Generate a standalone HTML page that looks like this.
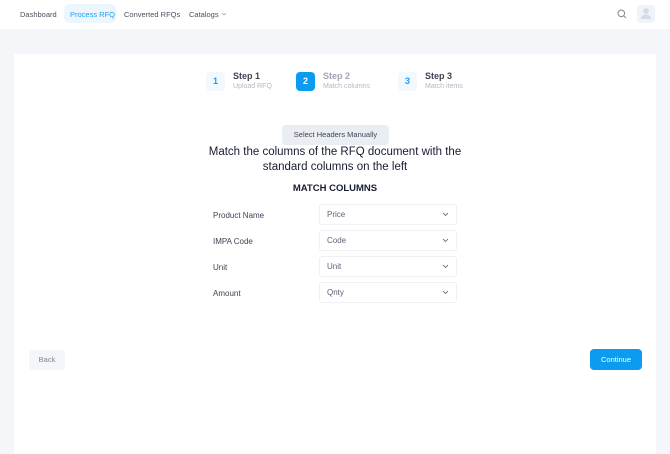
<!DOCTYPE html>
<html><head><style>
*{margin:0;padding:0;box-sizing:border-box}
body{width:670px;height:447px;background:#f4f6f9;font-family:"Liberation Sans",sans-serif;position:relative;overflow:hidden;color:#3f4254}
.a{position:absolute}
.nav{left:0;top:0;width:670px;height:29px;background:#fff}
.nl{font-size:7.5px;color:#4b4f5e;top:10px}
.card{left:14px;top:54px;width:642px;height:400px;background:#fff}
.sn{width:19px;height:19px;border-radius:4px;font-size:9px;font-weight:bold;text-align:center;line-height:19px}
.st{font-size:9px;font-weight:bold}
.ss{font-size:7px;color:#b5b5c3}
.lbl{font-size:8px;color:#3f4254;left:213px}
.sel{left:319px;width:138px;height:21px;border:1px solid #eef0f4;border-radius:3px;font-size:8px;padding:5px 0 0 7px;color:#5e6278}
.sel svg{position:absolute;right:7px;top:7px}
</style></head><body>
<div class="a nav"></div>
<div class="a nl" style="left:20px">Dashboard</div>
<div class="a" style="left:64px;top:4px;width:52px;height:19px;background:#eef6fd;border-radius:5px"></div>
<div class="a nl" style="left:70px;color:#1a9ff0">Process RFQ</div>
<div class="a nl" style="left:124px">Converted RFQs</div>
<div class="a nl" style="left:189px">Catalogs</div>
<svg class="a" style="left:221px;top:12px" width="6" height="4" viewBox="0 0 6 4"><path d="M1 1l2 2 2-2" fill="none" stroke="#aaa" stroke-width=".8"/></svg>
<svg class="a" style="left:617px;top:9px" width="10" height="10" viewBox="0 0 10 10"><circle cx="4.3" cy="4.3" r="3.3" fill="none" stroke="#888" stroke-width="1"/><path d="M6.8 6.8L9 9" stroke="#888" stroke-width="1"/></svg>
<div class="a" style="left:637px;top:5px;width:18px;height:18px;background:#f0f3f8;border-radius:4px"></div>
<svg class="a" style="left:640px;top:7px" width="12" height="13" viewBox="0 0 12 13"><circle cx="6" cy="4" r="2.8" fill="#d5dbe6"/><path d="M1 12c0-3 2.2-4.5 5-4.5s5 1.5 5 4.5z" fill="#d5dbe6"/></svg>
<div class="a card"></div>
<div class="a sn" style="left:206px;top:72px;background:#f1f8fe;color:#1a9ff0">1</div>
<div class="a st" style="left:233px;top:71px">Step 1</div>
<div class="a ss" style="left:233px;top:83px">Upload RFQ</div>
<div class="a sn" style="left:296px;top:72px;background:#0b9cf0;color:#fff">2</div>
<div class="a st" style="left:323px;top:71px;color:#a1a5b7">Step 2</div>
<div class="a ss" style="left:323px;top:83px">Match columns</div>
<div class="a sn" style="left:398px;top:72px;background:#f1f8fe;color:#1a9ff0">3</div>
<div class="a st" style="left:425px;top:71px">Step 3</div>
<div class="a ss" style="left:425px;top:83px">Match items</div>
<div class="a" style="left:282px;top:125px;width:107px;height:20px;background:#eaedf2;border-radius:4px;font-size:7.5px;text-align:center;line-height:20px;color:#3f4254">Select Headers Manually</div>
<div class="a" style="left:200px;top:145px;width:270px;text-align:center;font-size:11.5px;line-height:14.5px;color:#181c32">Match the columns of the RFQ document with the standard columns on the left</div>
<div class="a" style="left:200px;top:183px;width:270px;text-align:center;font-size:9.5px;font-weight:bold;color:#181c32">MATCH COLUMNS</div>
<div class="a lbl" style="top:211px">Product Name</div>
<div class="a lbl" style="top:237px">IMPA Code</div>
<div class="a lbl" style="top:263px">Unit</div>
<div class="a lbl" style="top:289px">Amount</div>
<div class="a sel" style="top:204px">Price<svg width="7" height="5" viewBox="0 0 7 5"><path d="M1 1l2.5 2.5L6 1" fill="none" stroke="#777" stroke-width=".9"/></svg></div>
<div class="a sel" style="top:230px">Code<svg width="7" height="5" viewBox="0 0 7 5"><path d="M1 1l2.5 2.5L6 1" fill="none" stroke="#777" stroke-width=".9"/></svg></div>
<div class="a sel" style="top:256px">Unit<svg width="7" height="5" viewBox="0 0 7 5"><path d="M1 1l2.5 2.5L6 1" fill="none" stroke="#777" stroke-width=".9"/></svg></div>
<div class="a sel" style="top:282px">Qnty<svg width="7" height="5" viewBox="0 0 7 5"><path d="M1 1l2.5 2.5L6 1" fill="none" stroke="#777" stroke-width=".9"/></svg></div>
<div class="a" style="left:29px;top:350px;width:36px;height:20px;background:#f4f6f9;border-radius:4px;font-size:7.5px;text-align:center;line-height:20px;color:#7e8299">Back</div>
<div class="a" style="left:590px;top:349px;width:52px;height:21px;background:#0b9cf0;border-radius:4px;font-size:7.5px;text-align:center;line-height:21px;color:#fff">Continue</div>
</body></html>
